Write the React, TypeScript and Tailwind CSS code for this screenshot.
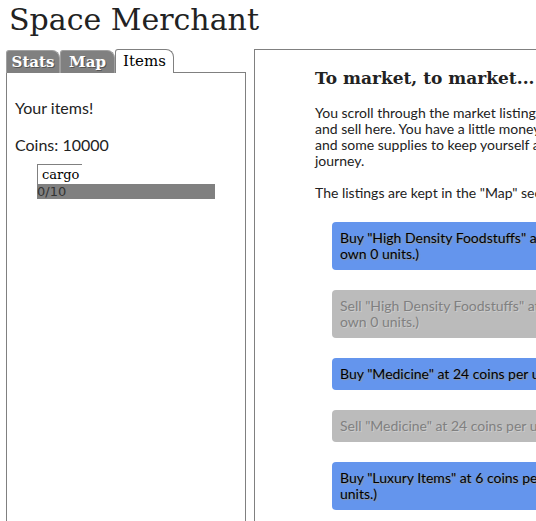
import React from "react";

const slab = "font-['DejaVu_Serif',serif]";

function Tabs() {
  return (
    <div className="flex h-[24px] items-end">
      <div className={`${slab} flex h-[23px] w-[54px] items-center justify-center rounded-tl-[3px] rounded-tr-[8px] border border-b-0 border-[#a0a0a0] bg-[#808080] text-[15px] font-bold text-white [text-shadow:1px_1px_0_#555]`}>
        Stats
      </div>
      <div className={`${slab} flex h-[23px] w-[55px] items-center justify-center rounded-tl-[3px] rounded-tr-[8px] border border-b-0 border-[#a0a0a0] bg-[#808080] text-[15px] font-bold text-white [text-shadow:1px_1px_0_#555]`}>
        Map
      </div>
      <div className={`${slab} flex h-[24px] w-[59px] items-center justify-center rounded-tl-[3px] rounded-tr-[8px] border border-b-0 border-[#808080] bg-white text-[15px] text-black`}>
        Items
      </div>
      <div className="flex-1 border-b border-[#808080]" />
    </div>
  );
}

function ItemsPanel() {
  return (
    <div className="h-[460px] border-x border-[#808080] px-[8px] pt-[24px] text-[16px] leading-[21px] text-[#222]">
      <p>Your items!</p>
      <p className="mt-[16px]">Coins: 10000</p>
      <div className="ml-[22px] mt-[9px] w-[178px]">
        <div className={`${slab} h-[20px] w-[45px] border-l border-t border-[#808080] pl-[4px] text-[13px] leading-[19px] text-black`}>
          cargo
        </div>
        <div className="h-[15px] bg-[#808080] font-['DejaVu_Sans',sans-serif] text-[13px] leading-[15px] text-[#333]">
          0/10
        </div>
      </div>
    </div>
  );
}

const buttons: { label: React.ReactNode; buy: boolean }[] = [
  { label: <>Buy "High Density Foodstuffs" at 12 coins per unit. (You<br />own 0 units.)</>, buy: true },
  { label: <>Sell "High Density Foodstuffs" at 12 coins per unit. (You<br />own 0 units.)</>, buy: false },
  { label: <>Buy "Medicine" at 24 coins per unit. (You own 0 units.)</>, buy: true },
  { label: <>Sell "Medicine" at 24 coins per unit. (You own 0 units.)</>, buy: false },
  { label: <>Buy "Luxury Items" at 6 coins per unit. (You own 0<br />units.)</>, buy: true },
];

function Market() {
  return (
    <div className="h-[480px] w-[420px] shrink-0 border-l border-t border-[#808080] pl-[60px] pt-[16px] text-[#222]">
      <h2 className={`${slab} text-[17px] font-bold leading-[24px] whitespace-nowrap`}>To market, to market...</h2>
      <div className="mt-[15px] whitespace-nowrap text-[14px] leading-[16px]">
        <p>
          You scroll through the market listings. There are goods to buy
          <br />
          and sell here. You have a little money to trade with,
          <br />
          and some supplies to keep yourself alive on the
          <br />
          journey.
        </p>
        <p className="mt-[16px]">The listings are kept in the "Map" section.</p>
      </div>
      <div className="ml-[17px] mt-[21px] flex flex-col gap-[20px]">
        {buttons.map((b, i) => (
          <div
            key={i}
            className={
              b.buy
                ? "w-[340px] whitespace-nowrap rounded-[4px] bg-[#6495ed] px-[8px] py-[8px] text-[14px] leading-[16px] text-black [text-shadow:1px_1px_1px_#999]"
                : "w-[340px] whitespace-nowrap rounded-[4px] bg-[#bbbbbb] px-[8px] py-[8px] text-[14px] leading-[16px] text-[#808080] [text-shadow:1px_1px_0_#ccc]"
            }
          >
            {b.label}
          </div>
        ))}
      </div>
    </div>
  );
}

export default function App() {
  return (
    <div className="h-[521px] w-[536px] overflow-hidden bg-white font-['Lato',sans-serif]">
      <h1 className={`${slab} h-[49px] pl-[9px] text-[30px] leading-[40px] text-[#222]`}>Space Merchant</h1>
      <div className="flex">
        <div className="ml-[6px] w-[240px] shrink-0">
          <Tabs />
          <ItemsPanel />
        </div>
        <div className="ml-[8px]">
          <Market />
        </div>
      </div>
    </div>
  );
}
